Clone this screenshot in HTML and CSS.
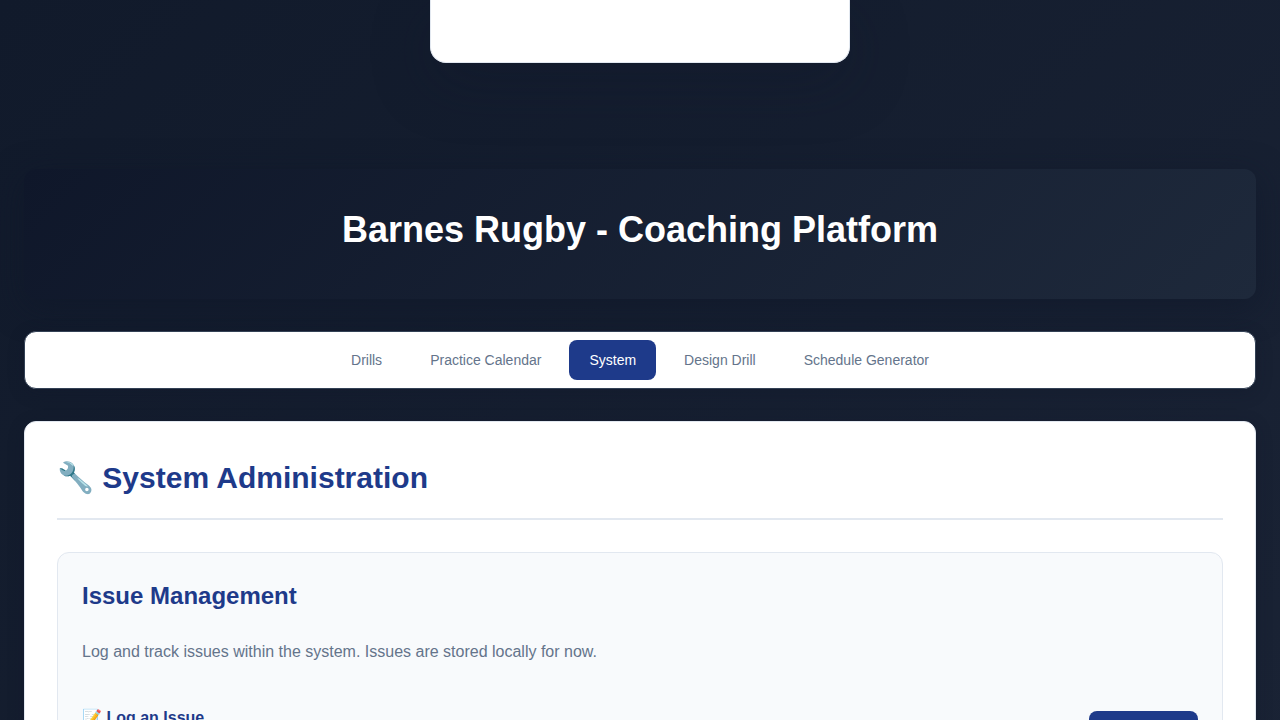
FILE: index.html
```html
<!DOCTYPE html>
<html lang="en">
<head>
<meta charset="utf-8">
<meta name="viewport" content="width=device-width, initial-scale=1">
<title>Barnes Rugby - Coaching Platform</title>
<link rel="stylesheet" href="styles.css">
</head>
<body>
<div class="intro"><div class="intro-card"></div></div>
<div class="shell">
  <header class="banner"><h1 class="banner-title">Barnes Rugby - Coaching Platform</h1></header>
  <nav class="tabs">
    <button type="button" class="tab">Drills</button>
    <button type="button" class="tab">Practice Calendar</button>
    <button type="button" class="tab tab-active" aria-current="page">System</button>
    <button type="button" class="tab">Design Drill</button>
    <button type="button" class="tab">Schedule Generator</button>
  </nav>
  <main class="panel">
    <h2 class="panel-title">🔧 System Administration</h2>
    <section class="box">
      <h3 class="box-title">Issue Management</h3>
      <p class="box-text">Log and track issues within the system. Issues are stored locally for now.</p>
      <div class="box-row">
        <h4 class="row-title" id="log-issue">📝 Log an Issue</h4>
        <button type="button" class="action" aria-labelledby="log-issue"></button>
      </div>
    </section>
  </main>
</div>
</body>
</html>
```
FILE: styles.css
```css
* {
  box-sizing: border-box;
  margin: 0;
  padding: 0;
}

body {
  min-height: 100vh;
  font-family: "Liberation Sans", Arial, sans-serif;
  font-size: 16px;
  line-height: 1.6;
  background: linear-gradient(135deg, #111a2b 0%, #1a2335 100%);
}

.intro {
  display: flex;
  justify-content: center;
  padding: 0 24px 82px;
}

.intro-card {
  width: 100%;
  max-width: 420px;
  height: 63px;
  background: #ffffff;
  border: 1px solid #e2e8f0;
  border-top: 0;
  border-radius: 0 0 16px 16px;
  box-shadow: 0 20px 60px rgba(15, 23, 42, 0.3);
}

.shell {
  display: flex;
  flex-direction: column;
  gap: 32px;
  padding: 24px;
}

.banner {
  padding: 32px 32px 40px;
  text-align: center;
  color: #ffffff;
  background: linear-gradient(135deg, #0f172a 0%, #1e293b 100%);
  border-radius: 12px;
  box-shadow: 0 8px 32px rgba(15, 23, 42, 0.6);
}

.banner-title {
  font-size: 36px;
  line-height: 58px;
}

.tabs {
  display: flex;
  flex-wrap: wrap;
  justify-content: center;
  gap: 8px;
  padding: 8px;
  background: #ffffff;
  border: 1px solid #334155;
  border-radius: 12px;
  box-shadow: 0 4px 16px rgba(15, 23, 42, 0.3);
}

.tab {
  padding: 12px 20px;
  font-family: inherit;
  font-size: 14px;
  line-height: 16px;
  color: #64748b;
  background: transparent;
  border: 0;
  border-radius: 8px;
  cursor: pointer;
}

.tab-active {
  color: #ffffff;
  background: #1e3a8a;
}

.panel {
  padding: 32px;
  background: #ffffff;
  border: 1px solid #e2e8f0;
  border-radius: 12px;
  box-shadow: 0 4px 16px rgba(15, 23, 42, 0.3);
}

.panel-title {
  margin-bottom: 32px;
  padding-bottom: 16px;
  font-size: 30px;
  line-height: 48px;
  color: #1e3a8a;
  border-bottom: 2px solid #e2e8f0;
}

.box {
  padding: 24px;
  background: #f8fafc;
  border: 1px solid #e2e8f0;
  border-radius: 12px;
}

.box-title {
  margin-bottom: 24px;
  font-size: 24px;
  line-height: 38px;
  color: #1e3a8a;
}

.box-text {
  margin-bottom: 40px;
  line-height: 26px;
  color: #64748b;
}

.box-row {
  display: flex;
  align-items: center;
  justify-content: space-between;
}

.row-title {
  margin-bottom: 24px;
  font-size: 16px;
  line-height: 26px;
  color: #1e3a8a;
}

.action {
  width: 109px;
  height: 38px;
  background: #1e3a8a;
  border: 0;
  border-radius: 8px;
  cursor: pointer;
}
```
